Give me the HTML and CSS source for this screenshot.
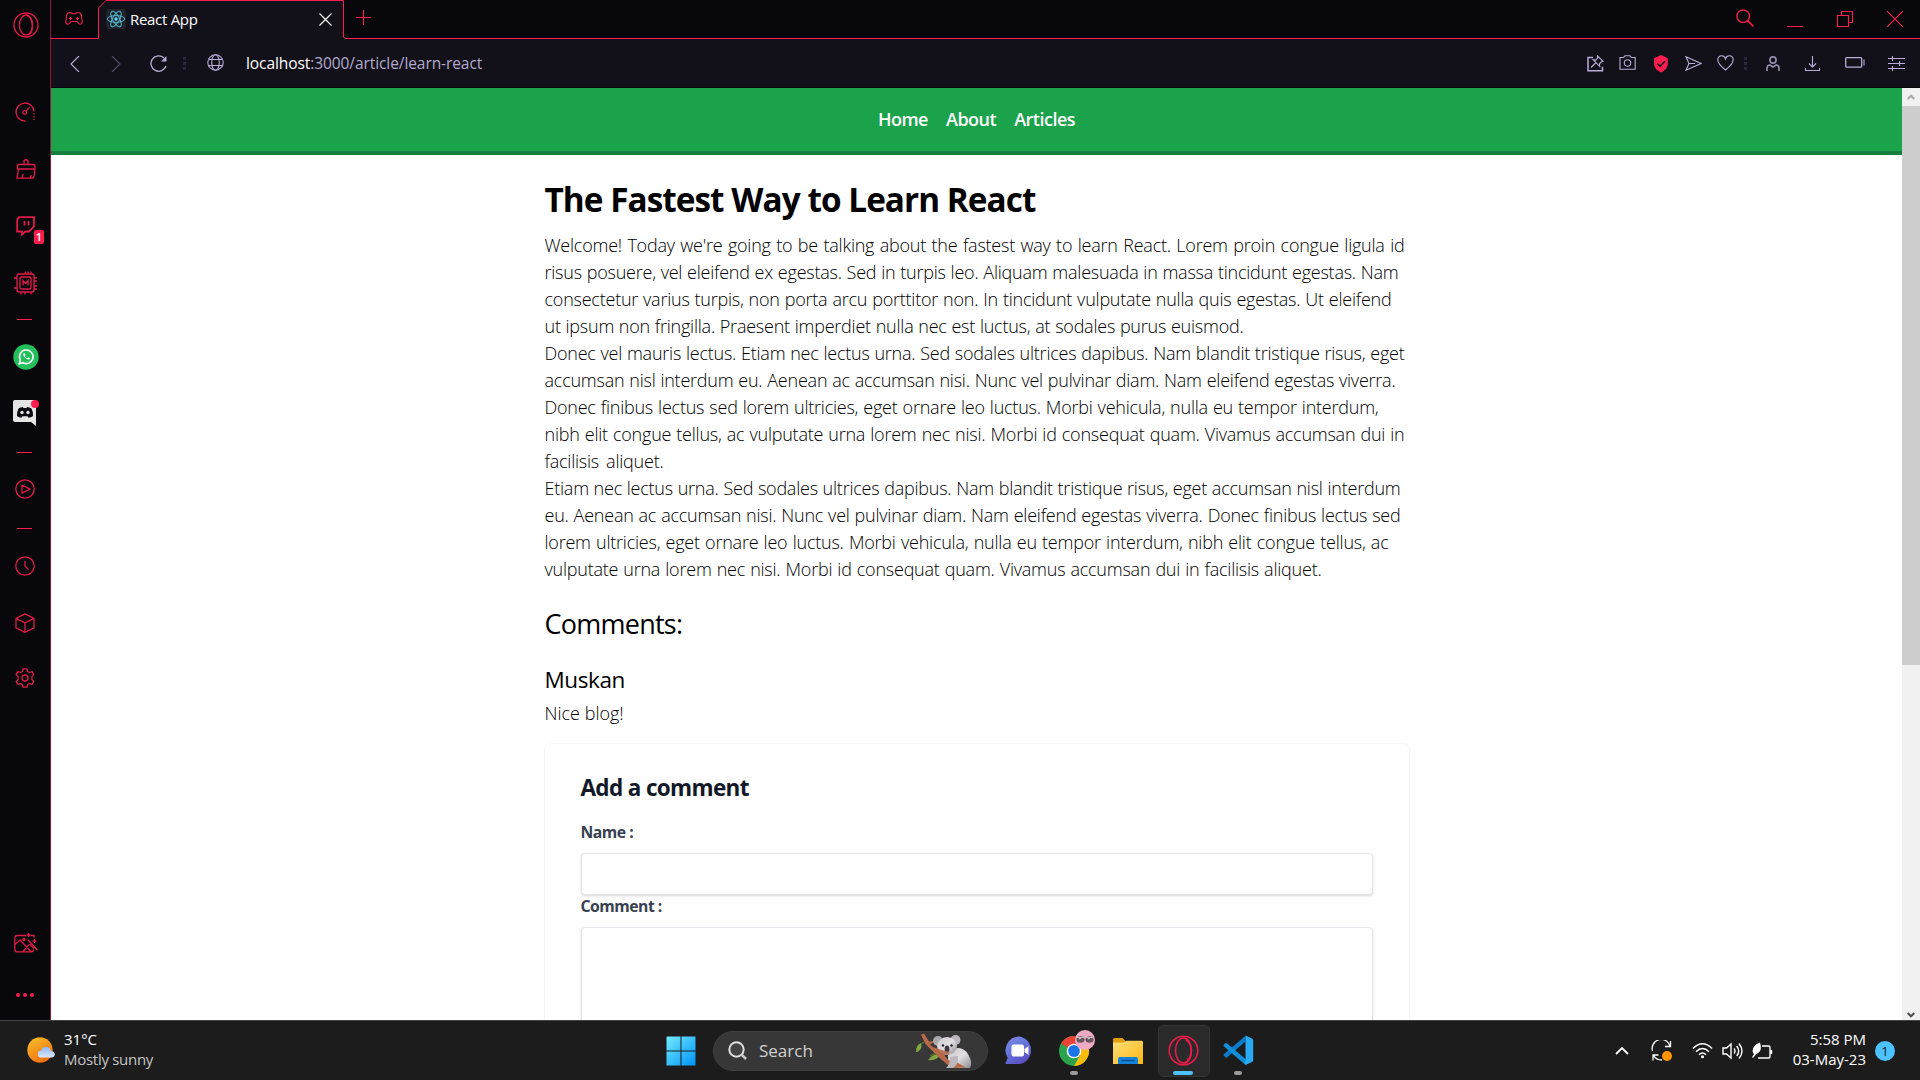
FILE: index.html
```html
<!DOCTYPE html>
<html lang="en">
<head>
<meta charset="utf-8">
<title>React App</title>
<link rel="stylesheet" href="styles.css">
</head>
<body>
<div class="desktop">
<div class="browser">
  <aside class="sidebar">
    <div class="slot nudge"><svg width="26" height="26" viewBox="0 0 26 26"><circle cx="13" cy="13" r="12"/><ellipse cx="13" cy="13" rx="6.6" ry="10"/><path d="M13 3c8 1 8 19 2.500 20"/></svg></div>
    <div></div>
    <div class="slot"><svg width="20" height="20" viewBox="0 0 20 20"><path d="M10.500 19A9 9 0 1 1 19 9.500"/><path d="M19 11v7" stroke-dasharray="1.500 1.500"/><circle cx="9.700" cy="10.500" r="1.800"/><path d="M11 9l3.500-3.500"/></svg></div>
    <div class="slot nudge"><svg width="20" height="20" viewBox="0 0 20 20"><path d="M8 5.500V1.500q2-1.500 4 0v4M2.500 5.500h15q1.500 0 1.500 1.500v3H1.500V7q0-1.500 1-1.500zM2.500 10L1 19.200h16.500q1.500-4 1-9M6 19l1-4M14.500 19l.7-3"/></svg></div>
    <div class="slot nudge"><svg width="19" height="20" viewBox="0 0 19 20"><path d="M3 1.200h15v9.300l-5 5H9.500L6 18.500V15.500H1.200V4z" stroke-width="1.800"/><path d="M8.500 5v4.500M12.500 5v4.500" stroke-width="1.800"/></svg><b class="count">1</b></div>
    <div class="slot nudge"><svg width="25" height="24" viewBox="0 0 25 24"><rect x="4" y="3" width="17" height="18" rx="2"/><rect x="7" y="6" width="11" height="12" rx="1.500"/><path d="M10 14.500v-5l2.500 3 2.500-3v5M12.500 3V.5M15 3V.5M18 3V.5M8 23.500V21M12 23.500V21M18 23.500V21M1 7h3M1 17h3M21 7h3M21 10h3M21 15h3M21 18h3"/></svg></div>
    <div class="slot"><i class="dash"></i></div>
    <div class="slot nudge"><svg width="26" height="26" viewBox="0 0 26 26" stroke="none"><circle cx="13" cy="13" r="12.700" fill="#22bf5b"/><path d="M6.300 19.700l1-3.600a6.800 6.800 0 1 1 2.600 2.600z" fill="none" stroke="#fff" stroke-width="1.600"/><path d="M10.500 9.500c-1.700 1.500 3.500 7.200 5.900 5.800 1-.8.400-1.500-1.200-2l-1 .9c-1.100-.4-1.900-1.300-2.300-2.300l.7-.8c-.6-1.600-1-2.300-2.100-1.600z" fill="#fff"/></svg></div>
    <div class="slot"><svg width="24" height="26" viewBox="0 0 24 26" stroke="none"><path d="M2 0h19q2 0 2 2v24l-5-4H2q-2 0-2-2V2q0-2 2-2z" fill="#e5e5e5"/><path d="M5.500 8.500q2-1.500 4.500-1.500l.5 1h3l.5-1q2.500 0 4.500 1.500 2 4 1.500 7.500-2 1.500-4.500 1.700l-1-1.500h-5l-1 1.500Q6 17.500 4 16q-.5-3.500 1.500-7.500z" fill="#0a0a10"/><circle cx="9" cy="12.500" r="1.700" fill="#e5e5e5"/><circle cx="15" cy="12.500" r="1.700" fill="#e5e5e5"/></svg><i class="alert"></i></div>
    <div class="slot"><i class="dash"></i></div>
    <div class="slot"><svg width="20" height="20" viewBox="0 0 20 20"><circle cx="10" cy="10" r="9.200"/><path d="M7 6v8.200l8-4.100z" stroke-linejoin="round"/></svg></div>
    <div class="slot"><i class="dash"></i></div>
    <div class="slot"><svg width="20" height="20" viewBox="0 0 20 20"><circle cx="10" cy="10" r="9.200"/><path d="M10 5v5l3.500 3.500"/></svg></div>
    <div class="slot"><svg width="20" height="20" viewBox="0 0 20 20"><path d="M10 .8l9 4.500v9.600l-9 4.400-9-4.400V5.300zM1 5.300l9 4.500 9-4.500M10 9.800v9.500"/></svg></div>
    <div class="slot"><svg width="20" height="20" viewBox="0 0 20 20"><path d="M8 .8h4l.6 2.700 1.900 1 2.600-.9 1.700 3-1.900 2v2.800l1.900 2-1.700 3-2.600-.9-1.900 1-.6 2.700H8l-.6-2.700-1.900-1-2.600.9-1.700-3 1.900-2V8.600l-1.900-2 1.700-3 2.600.9 1.900-1z" stroke-linejoin="round"/><circle cx="10" cy="10" r="3"/></svg></div>
    <div></div>
    <div class="slot nudge"><svg width="24" height="20" viewBox="0 0 24 20"><path d="M12 2.500H3.500q-2.700 0-2.700 2.700v11q0 2.700 2.700 2.700H17q2.500 0 3-2.500M1 11.500l5-4.500 11 11.500M9 18.500l5-6 2-1 4 4M14 7l9.500 10M17 2.500h3v2M14.500 0v4M12.500 2h4M20.500 6v4M18.500 8h4"/><circle cx="10" cy="6.500" r="1" fill="#fa1e4e"/></svg></div>
    <div class="slot more"><i></i><i></i><i></i></div>
  </aside>

  <div class="window">
    <header class="tabstrip">
      <svg class="outline" width="1870" height="39" viewBox="0 0 1870 39"><path d="M49 39V8l8-7.500h237V39z" fill="#12111a" stroke="none"/><path d="M.5 39V38.500H48.500V8L56 .5H293.500V37l1.500 1.500H1870"/></svg>
      <div class="pad"><svg width="18" height="14" viewBox="0 0 18 14"><path d="M4 .8h2.500l1 1h3l1-1H14q2 0 2.500 3l.7 6q0 2.500-2 2.500-1.500 0-3-2.800H5.800q-1.500 2.800-3 2.800-2 0-2-2.500l.7-6q.5-3 2.500-3z"/><path d="M4 6.500h3M5.500 5v3M11 6.500h3M12.500 5v3"/></svg></div>
      <div class="tab">
        <svg width="20" height="20" viewBox="0 0 20 20"><rect width="20" height="20" rx="2" fill="#20232a" stroke="none"/><g stroke="#52b5d0" stroke-width="1"><ellipse cx="10" cy="10" rx="8.700" ry="3.400"/><ellipse cx="10" cy="10" rx="8.700" ry="3.400" transform="rotate(60 10 10)"/><ellipse cx="10" cy="10" rx="8.700" ry="3.400" transform="rotate(120 10 10)"/></g><circle cx="10" cy="10" r="1.700" fill="#61dafb" stroke="none"/></svg>
        <span>React App</span>
        <svg class="x" width="13" height="13" viewBox="0 0 13 13"><path d="M.5.500l12 12M12.500.5l-12 12"/></svg>
      </div>
      <svg class="plus" width="15" height="15" viewBox="0 0 15 15"><path d="M7.500 0v15M0 7.500h15"/></svg>
      <div class="controls">
        <div class="slot"><svg width="18" height="18" viewBox="0 0 18 18" opacity=".9"><circle cx="7.200" cy="7.200" r="6.300" stroke-width="1.500"/><path d="M11.500 11.500l6 6" stroke-width="1.800"/></svg></div>
        <div class="slot low"><svg width="16" height="1" viewBox="0 0 16 1"><path d="M0 .5h16"/></svg></div>
        <div class="slot"><svg width="16" height="16" viewBox="0 0 16 16"><path d="M.5 4.500h11v11H.5zM4.500 4.500v-4h11v11h-4"/></svg></div>
        <div class="slot"><svg width="16" height="16" viewBox="0 0 16 16"><path d="M0 0l16 16M16 0L0 16"/></svg></div>
      </div>
    </header>

    <div class="addressbar">
      <div class="slot"><svg width="10" height="16" viewBox="0 0 10 16"><path d="M9 0L1 8l8 8"/></svg></div>
      <div class="slot off"><svg width="10" height="16" viewBox="0 0 10 16"><path d="M1 0l8 8-8 8"/></svg></div>
      <div class="slot"><svg width="17" height="17" viewBox="0 0 17 17"><path d="M14 3A7.700 7.700 0 1 0 16 11" stroke-width="1.300"/><path d="M16.500 1v5.500H11z" fill="#b9acd6" stroke="none"/></svg></div>
      <div class="slot"><i class="dots"></i></div>
      <div class="slot up"><svg width="17" height="17" viewBox="0 0 17 17"><circle cx="8.500" cy="8.500" r="7.700"/><ellipse cx="8.500" cy="8.500" rx="3.800" ry="7.700"/><path d="M1.500 5.500h14M1.500 11.500h14"/></svg></div>
      <div class="url"><b>localhost</b>:3000/article/learn-react</div>
      <div class="slot"><svg width="17" height="17" viewBox="0 0 17 17"><path d="M6 2.500H1v13.300h14.500v-4" stroke-width="1.500"/><path d="M10.500.8l5.500 5.500-1.500.5-2 2 .2 2.500-6.500-6.500 2.500.3 2-2zM8.500 8l-4.500 4.500"/></svg></div>
      <div class="slot up"><svg width="17" height="15" viewBox="0 0 17 15"><path d="M1 2.500h3.500L6 .8h5l1.500 1.700h3.700v11.700H1z"/><circle cx="8.500" cy="8" r="3.200"/></svg></div>
      <div class="slot"><svg width="16" height="18" viewBox="0 0 16 18" stroke="none"><path d="M8 0l6.800 3.200V9q0 5-6.800 8.500Q1 14 1 9V3.200z" fill="#fa1e4e"/><path d="M4.300 8.500L7 11.200l5-5" fill="none" stroke="#12111a" stroke-width="1.600"/></svg></div>
      <div class="slot"><svg width="17" height="15" viewBox="0 0 17 15"><path d="M1 .8l15 6.700L1 14.200l3-6.700zM4 7.500h6"/></svg></div>
      <div class="slot up"><svg width="17" height="16" viewBox="0 0 17 16"><path d="M8.500 15C3.500 11 .8 8.500.8 5 .8 2.500 2.500.8 4.700.8c1.800 0 3.300 1.200 3.800 3C9 2 10.500.8 12.300.8c2.200 0 3.900 1.700 3.900 4.200 0 3.500-2.700 6-7.700 10z"/></svg></div>
      <div class="slot"><i class="dots"></i></div>
      <div class="slot"><svg width="14" height="15" viewBox="0 0 14 15" opacity=".8"><circle cx="7" cy="4" r="3.100" stroke-width="1.600"/><path d="M1 15V12q0-3 3-3l3 2 3-2q3 0 3 3v3" stroke-width="1.600"/></svg></div>
      <div class="slot"><svg width="15" height="15" viewBox="0 0 15 15"><path d="M7.500 0v11M4 7.500L7.500 11 11 7.500M.5 12v2.500h14V12"/></svg></div>
      <div class="slot up"><svg width="20" height="11" viewBox="0 0 20 11"><rect x=".7" y=".7" width="16" height="9.500" rx="1" stroke-width="1.300"/><path d="M19 2.500v6"/></svg></div>
      <div class="slot"><svg width="17" height="15" viewBox="0 0 17 15"><path d="M0 2.500h17M0 7.500h17M0 12.500h17M4.500 0v5M11.500 5v5M4.500 10v5"/></svg></div>
    </div>

    <div class="viewport">
      <main class="page">
        <nav class="nav"><a>Home</a><a>About</a><a>Articles</a></nav>
        <article class="article">
          <h1>The Fastest Way to Learn React</h1>
          <p class="intro">
            <span>Welcome! Today we're going to be talking about the fastest way to learn React. Lorem proin congue ligula id</span>
            <span>risus posuere, vel eleifend ex egestas. Sed in turpis leo. Aliquam malesuada in massa tincidunt egestas. Nam</span>
            <span>consectetur varius turpis, non porta arcu porttitor non. In tincidunt vulputate nulla quis egestas. Ut eleifend</span>
            <span>ut ipsum non fringilla. Praesent imperdiet nulla nec est luctus, at sodales purus euismod.</span>
          </p>
          <p class="middle">
            <span>Donec vel mauris lectus. Etiam nec lectus urna. Sed sodales ultrices dapibus. Nam blandit tristique risus, eget</span>
            <span>accumsan nisl interdum eu. Aenean ac accumsan nisi. Nunc vel pulvinar diam. Nam eleifend egestas viverra.</span>
            <span>Donec finibus lectus sed lorem ultricies, eget ornare leo luctus. Morbi vehicula, nulla eu tempor interdum,</span>
            <span>nibh elit congue tellus, ac vulputate urna lorem nec nisi. Morbi id consequat quam. Vivamus accumsan dui in</span>
            <span>facilisis aliquet.</span>
          </p>
          <p class="outro">
            <span>Etiam nec lectus urna. Sed sodales ultrices dapibus. Nam blandit tristique risus, eget accumsan nisl interdum</span>
            <span>eu. Aenean ac accumsan nisi. Nunc vel pulvinar diam. Nam eleifend egestas viverra. Donec finibus lectus sed</span>
            <span>lorem ultricies, eget ornare leo luctus. Morbi vehicula, nulla eu tempor interdum, nibh elit congue tellus, ac</span>
            <span>vulputate urna lorem nec nisi. Morbi id consequat quam. Vivamus accumsan dui in facilisis aliquet.</span>
          </p>
          <h2>Comments:</h2>
          <h3>Muskan</h3>
          <p class="reply">Nice blog!</p>
          <form class="card">
            <h4>Add a comment</h4>
            <label>Name :</label>
            <input type="text">
            <label>Comment :</label>
            <textarea></textarea>
          </form>
        </article>
      </main>
      <div class="scrollbar">
        <div class="arrow"><svg width="8" height="6" viewBox="0 0 8 6"><path d="M.7 5L4 1.700 7.300 5" stroke="#a9a9a9" stroke-width="2"/></svg></div>
        <div class="thumb"></div>
        <div class="arrow end"><svg width="8" height="6" viewBox="0 0 8 6"><path d="M.7 1L4 4.300 7.300 1" stroke="#505050" stroke-width="2"/></svg></div>
      </div>
    </div>
  </div>
</div>

<footer class="taskbar">
  <div class="weather">
    <svg width="30" height="28" viewBox="0 0 30 28"><defs><linearGradient id="sun" x1="0" y1="0" x2=".6" y2="1"><stop offset="0" stop-color="#f8c22d"/><stop offset="1" stop-color="#f0700e"/></linearGradient><linearGradient id="cloud" x1="0" y1="0" x2="0" y2="1"><stop offset="0" stop-color="#8ab4ef"/><stop offset="1" stop-color="#dde9fb"/></linearGradient></defs><circle cx="13" cy="13" r="12.700" fill="url(#sun)"/><path d="M14.500 20.500a3.500 3.500 0 0 1-.3-7q1.300-4 5-3.800 3.800.3 4.600 4 4 .5 4 3.500 0 3-3.300 3.300z" fill="url(#cloud)"/></svg>
    <div class="text"><div>31°C</div><div class="dim">Mostly sunny</div></div>
  </div>
  <div class="slot start"><svg width="30" height="30" viewBox="0 0 30 30"><defs><linearGradient id="win" gradientUnits="userSpaceOnUse" x1="0" y1="0" x2="29" y2="29"><stop offset="0" stop-color="#74edff"/><stop offset="1" stop-color="#0094f8"/></linearGradient></defs><path d="M1 .5h13.500v14H.5V1zM15.500.5H29q.5 0 .5.500v13.500h-14zM.5 15.500h14v14H1q-.5 0-.5-.5zM15.500 15.500h14V29q0 .5-.5.500H15.500z" fill="url(#win)"/></svg></div>
  <div class="search">
    <svg width="20" height="20" viewBox="0 0 20 20"><circle cx="8.500" cy="8.500" r="7.200" stroke="#dedede" stroke-width="2" fill="#444"/><path d="M13.500 13.500l4.500 4.500" stroke="#c8c8c8" stroke-width="2.500"/></svg>
    <span>Search</span>
    <svg class="koala" width="56" height="36" viewBox="0 0 56 36"><defs><linearGradient id="fur" x1="0" y1="0" x2="1" y2="1"><stop offset="0" stop-color="#c9c6cb"/><stop offset=".5" stop-color="#e2e0e3"/><stop offset="1" stop-color="#8d8991"/></linearGradient></defs><path d="M0 19q0-7 5-9 2 6-3.500 9zM12 27q5-7 12-6-2 7-12 6z" fill="#82a544"/><path d="M5 11l5-3M14 23q6-3 10-3" stroke="#4e7227" stroke-width="1.300"/><path d="M32 18q13-7 20 3 5 8 2 14H32z" fill="url(#fur)"/><path d="M5 1.500l3-1 5 8 8-1-7 4 15 13q6 5 12 5l9 5-14 .5Q26 28 9.500 11z" fill="#b86a48"/><path d="M34 24q0 8-4 11h7q6-4 5-12z" fill="#bbb8bd"/><circle cx="22" cy="8" r="5" fill="#aaa7ad"/><circle cx="39.500" cy="7" r="5" fill="#bbb8bd"/><ellipse cx="31" cy="13" rx="10" ry="9" fill="url(#fur)"/><circle cx="27" cy="12.500" r="1.200" fill="#221d2b"/><circle cx="35.500" cy="12.500" r="1.200" fill="#221d2b"/><ellipse cx="31" cy="16" rx="2.400" ry="3.500" fill="#3c3740"/><path d="M17 14q5 9 10 14l4-2-3-5 4 1 2-3-5-1z" fill="#b86a48" opacity=".9"/></svg>
  </div>
  <div class="slot chat"><svg width="29" height="29" viewBox="0 0 29 29"><defs><linearGradient id="chat" x1="0" y1="0" x2=".6" y2="1"><stop offset="0" stop-color="#8a7fe0"/><stop offset=".35" stop-color="#6a7fe0"/><stop offset="1" stop-color="#5a4fc4"/></linearGradient></defs><path d="M14.700.5A14 14 0 0 1 14.700 28H1.500Q0 28 .7 26.500L2.700 22A14 14 0 0 1 14.700.5z" fill="url(#chat)"/><rect x="6.500" y="8.500" width="12.500" height="12" rx="2" fill="#fff"/><path d="M19.500 13l4-3v9l-4-3z" fill="#fff"/></svg></div>
  <div class="slot"><svg class="chrome" width="36" height="38" viewBox="0 0 36 38"><g transform="translate(15 21)"><circle r="15" fill="#2ba24c"/><path d="M0 0L-13-7.500A15 15 0 0 1 13-7.500z" fill="#ea4335"/><path d="M0 0L13-7.500A15 15 0 0 1 0 15L6.500 3.700z" fill="#fbbc05"/><path d="M0-7h13.200L11-10H0z" fill="#ea4335"/><circle r="7.300" fill="#fff"/><circle r="5.900" fill="#1a73e8"/></g><circle cx="26" cy="10" r="10" fill="#f0abc4"/><ellipse cx="21.500" cy="9.500" rx="4" ry="3.300" fill="#67545e"/><ellipse cx="30.500" cy="9.500" rx="4" ry="3.300" fill="#67545e"/><path d="M18 7.500h16" stroke="#c9bac1"/><path d="M20 9l2-1M29 9l2-1" stroke="#ccc"/></svg><i class="run"></i></div>
  <div class="slot"><svg width="30" height="28" viewBox="0 0 30 28"><defs><linearGradient id="fold" x1="0" y1="0" x2="1" y2="1"><stop offset="0" stop-color="#ffe07a"/><stop offset="1" stop-color="#fbb613"/></linearGradient></defs><path d="M0 7V2.500Q0 1 1.500 1h8l3.500 3.500h6V8z" fill="#e0a00e"/><path d="M0 5.500h11l2.500-1.700H28.500q1.500 0 1.500 1.500V27H0z" fill="url(#fold)"/><path d="M5 27v-5q0-2 2-2h16q2 0 2 2v5z" fill="#1583d8"/><path d="M8.500 23.500h13" stroke="#0b4f91" stroke-width="1.400"/></svg></div>
  <div class="slot active"><svg width="31" height="31" viewBox="0 0 31 31" stroke="#e91c49" stroke-width="1.500"><circle cx="15.500" cy="15.500" r="14.300"/><ellipse cx="15.500" cy="15.500" rx="8" ry="12.500"/><path d="M15.500 3c10 1 10 24 1 25M18 5c7 4 7 16 1 20"/></svg><i class="run wide"></i></div>
  <div class="slot"><svg width="31" height="31" viewBox="0 0 31 31"><path d="M22.500 6.500L4 22.500Q3 23 2 22L.7 20.500Q0 19.800 1 19L22.500.7z" fill="#0a7ac8"/><path d="M22.500 24L4 8.200Q3 7.500 2 8.500L.7 10Q0 10.700 1 11.500L22.500 30z" fill="#108ed8"/><path d="M22.500.6l6.500 3q1.200.7 1.200 2v19.500q0 1.300-1.200 2l-6.500 3-1-1.500L22.500 24z" fill="#27aaf2"/></svg><i class="run"></i></div>
  <div></div>
  <div class="slot"><svg width="14" height="9" viewBox="0 0 14 9"><path d="M1 8l6-6 6 6" stroke="#fff" stroke-width="1.800"/></svg></div>
  <div class="slot"><svg width="22" height="22" viewBox="0 0 22 22" stroke="#fff" stroke-width="1.300"><path d="M1.500 11A9 9 0 0 1 19 6M19.500 1v5.500H14M11 20Q5 20 2.500 15.500M2 20.500V15h5.500"/><circle cx="16" cy="16" r="5" fill="#ff9500" stroke="none"/></svg></div>
  <div></div>
  <div class="slot"><svg width="21" height="17" viewBox="0 0 21 17" stroke="#fff" stroke-width="1.600"><path d="M1 6.500q9.500-9.500 19 0M4 9.700q6.500-6.500 13 0M7 12.700q3.500-3.500 7 0"/><circle cx="10.500" cy="14.700" r="1.500" fill="#fff" stroke="none"/></svg></div>
  <div class="slot"><svg width="21" height="18" viewBox="0 0 21 18" stroke="#fff" stroke-width="1.400"><path d="M1 6h3.500L9 2v14l-4.500-4H1zM12 6.500q2 2.500 0 5M14.700 4q4 5 0 10M17 1.500q6 7.500 0 15"/></svg></div>
  <div class="slot"><svg width="21" height="18" viewBox="0 0 21 18" stroke="#fff" stroke-width="1.400"><path d="M10 4h6.500q1.500 0 1.500 1.500v9q0 1.500-1.500 1.500H6M19.500 8v4"/><path d="M1 11Q-1 4 8 .5q2.500 8-2 10.500-2 1.500-4 1z" fill="#fff" stroke="none"/><path d="M.5 15.500L4 11"/></svg></div>
  <div class="clock text"><div>5:58 PM</div><div>03-May-23</div></div>
  <div class="badge">1</div>
</footer>
</div>
</body>
</html>
```
FILE: styles.css
```css
* { box-sizing: border-box; margin: 0; padding: 0; }
body { width: 1920px; height: 1080px; overflow: hidden; font-family: "Open Sans", "Noto Sans", sans-serif; background: #fff; }
svg { display: block; fill: none; flex: none; }
svg:not([stroke]) { stroke: currentColor; stroke-width: 1.1; }
i { display: block; }
.slot { display: flex; align-items: center; justify-content: center; position: relative; }
.desktop { display: grid; grid-template-rows: 1020px 60px; height: 1080px; }
.browser { display: grid; grid-template-columns: 50px 1870px; background: #08070c; min-height: 0; }

.sidebar { display: grid; grid-template-rows: 50px 34px 56px 57px 57px 58px 14px 62px 50px 28px 46px 32px 44px 70px 40px 1fr 52px 51px; color: #e01b48; }
.sidebar .slot { padding-right: 1px; }
.sidebar svg:not([stroke]) { stroke-width: 1.3; }
.sidebar .nudge { padding-right: 0; padding-left: 1px; }
.dash { width: 15px; height: 1px; background: #fa1e4e; }
.count { position: absolute; left: 34px; top: 33px; width: 10px; height: 14px; border-radius: 2px; background: #fa1e4e; color: #fff; font: 600 11px/14px "Open Sans", sans-serif; text-align: center; }
.alert { position: absolute; left: 31px; top: 12px; width: 8px; height: 8px; border-radius: 50%; background: #fa1e4e; }
.more { gap: 3px; }
.more i { width: 4px; height: 4px; border-radius: 50%; background: #fa1e4e; }

.window { display: grid; grid-template-rows: 39px 49px 932px; border-left: 1px solid #8e1734; }
.tabstrip { position: relative; display: flex; margin-left: -1px; color: #fa1e4e; }
.outline { position: absolute; left: 0; top: 0; }
.tabstrip .outline { stroke-width: 1; }
.pad { width: 48px; height: 38px; display: flex; align-items: center; justify-content: center; }
.tab { position: relative; display: flex; align-items: center; width: 246px; height: 38px; padding: 0 12px 0 8px; color: #fff; font-size: 15px; letter-spacing: -.3px; }
.tab span { margin-left: 4px; }
.tab .x { margin-left: auto; }
.plus { margin: 10px 0 0 12px; }
.controls { position: relative; margin-left: auto; display: grid; grid-template-columns: repeat(4, 50px); height: 38px; }
.controls .slot:first-child { padding-bottom: 2px; }
.low { padding-top: 14px; }
.addressbar { display: grid; grid-template-columns: 48px 34px 50px 3px 58px 1fr 32px 32px 34px 32px 32px 8px 46px 34px 50px 34px; padding-right: 6px; background: #12111a; color: #b9acd6; border-bottom: 1px solid #08070c; }
.addressbar > .slot:nth-child(n+7) { padding-right: 1px; }
.addressbar .off { opacity: .4; }
.addressbar .up { padding-bottom: 2px; }
.dots { width: 3px; height: 13px; background: linear-gradient(#2a2739 3px, transparent 3px 5px, #2a2739 5px 8px, transparent 8px 10px, #2a2739 10px); }
.url { padding-left: 2px; font-size: 15.5px; line-height: 49px; letter-spacing: -.08px; color: #b3a9cc; }
.url b { font-weight: 400; color: #fff; }

.viewport { display: grid; grid-template-columns: 1851px 18px; overflow: hidden; background: #fff; }
.page { overflow: hidden; height: 932px; }
.nav { display: flex; justify-content: center; gap: 18px; height: 67px; line-height: 63px; background: #1aa34a; border-bottom: 4px solid #15803d; color: #fff; font-size: 18px; font-weight: 600; letter-spacing: -.5px; }
.article { width: 864px; margin: 0 auto; padding-top: 24px; color: #000; }
h1 { font-size: 33.3px; line-height: 41px; font-weight: 700; letter-spacing: -.95px; white-space: nowrap; margin-bottom: 12px; }
p { font-size: 18px; line-height: 27px; font-weight: 340; letter-spacing: -.23px; }
p span { display: block; white-space: nowrap; text-align-last: justify; }
.intro span:nth-child(1) { width: 860px; }
.intro span:nth-child(2) { width: 854px; }
.intro span:nth-child(3) { width: 847px; }
.intro span:nth-child(4) { width: 699px; }
.middle span:nth-child(1) { width: 860px; }
.middle span:nth-child(2) { width: 851px; }
.middle span:nth-child(3) { width: 834px; }
.middle span:nth-child(4) { width: 860px; }
.middle span:nth-child(5) { width: 119px; }
.outro span:nth-child(1) { width: 856px; }
.outro span:nth-child(2) { width: 856px; }
.outro span:nth-child(3) { width: 844px; }
.outro span:nth-child(4) { width: 777px; }
h2 { margin-top: 23px; font-size: 27px; line-height: 36px; font-weight: 400; letter-spacing: -.75px; }
h3 { margin: 23px 0 5px; font-size: 22.5px; line-height: 30px; font-weight: 500; letter-spacing: -.4px; }
.reply { letter-spacing: 0; }
.card { margin-top: 17px; padding: 27px 36px; border-radius: 5px; box-shadow: 0 1px 3px rgba(0,0,0,.08), 0 0 2px rgba(0,0,0,.05); display: flex; flex-direction: column; height: 500px; background: #fefefe; }
h4 { font-size: 22.5px; line-height: 34px; font-weight: 700; letter-spacing: -.65px; color: #111827; margin-bottom: 16px; }
label { font-size: 15.75px; line-height: 23px; font-weight: 700; letter-spacing: -.5px; color: #374151; margin-bottom: 9px; }
input, textarea { border: 1px solid #e5e7eb; border-radius: 4px; box-shadow: 0 1px 3px rgba(0,0,0,.1), 0 1px 2px rgba(0,0,0,.06); resize: none; flex: none; background: #fff; }
input { height: 42px; }
textarea { height: 160px; }

.scrollbar { background: #f1f1f1; display: flex; flex-direction: column; }
.arrow { height: 18px; display: flex; align-items: center; justify-content: center; }
.thumb { height: 559px; background: #cdcdcd; }
.end { margin-top: auto; padding-top: 7px; }

.taskbar { display: grid; grid-template-columns: 652px 61px 275px 59px 53px 56px 54px 56px 1fr 40px 39px 6px 30px 30px 30px 89px 29px 25px; align-items: center; background: #1c1c1c; border-top: 1px solid #434343; color: #fff; font-size: 15px; line-height: 20px; }
.taskbar svg:not([stroke]) { stroke: none; }
.taskbar .slot { height: 59px; }
.text { padding-bottom: 4px; }
.weather { display: flex; gap: 7px; padding-left: 27px; align-items: center; }
.dim { color: #c5c5c5; letter-spacing: -.28px; }
.start { padding-right: 3px; }
.chat { padding-left: 3px; }
.search { height: 40px; border-radius: 20px; background: #373737; display: flex; align-items: center; padding: 0 15px 0 14px; border: 1px solid #404040; font-size: 17px; color: #d0d0d0; }
.search span { margin-left: 11px; }
.koala { margin-left: auto; }
.chrome { margin: 0 0 4px 6px; }
.run { position: absolute; bottom: 5px; left: 50%; width: 8px; height: 4px; margin-left: -4px; border-radius: 2px; background: #9a9a9a; }
.active::before { content: ""; position: absolute; left: 2px; top: 4px; width: 50px; height: 50px; background: #2a2a2a; border: 1px solid #333; border-radius: 5px; }
.active svg { position: relative; }
.wide { width: 20px; margin-left: -10px; background: #4cc2ff; }
.clock { text-align: right; white-space: nowrap; }
.badge { width: 20px; height: 20px; margin-left: 9px; border-radius: 50%; background: #4cc2ff; color: #1c1c1c; font-size: 13px; text-align: center; }
```
